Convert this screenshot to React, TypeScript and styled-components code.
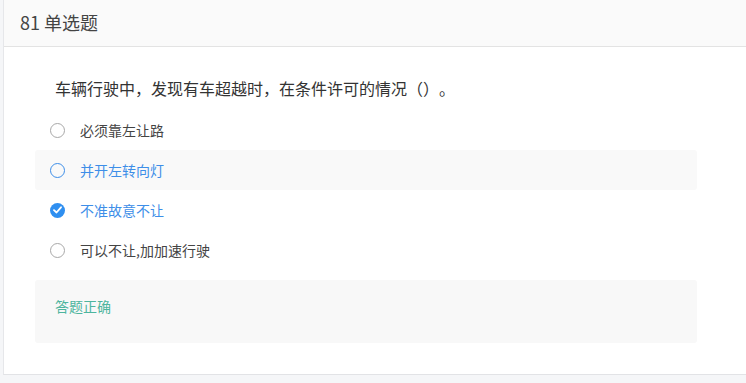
import React from "react"
import styled, { createGlobalStyle } from "styled-components"

const GlobalStyle = createGlobalStyle`
    html, body {
        margin: 0;
        padding: 0;
        background: #f5f6f8;
        font-family: "Noto Sans CJK SC", "Noto Sans", sans-serif;
        text-spacing-trim: space-all;
    }
`

const Page = styled.div`
    padding-left: 3px;
    height: 383px;
    background: #f5f6f8;
`

const Card = styled.div`
    background: #fff;
    border-left: 1px solid #e6e7ea;
    border-bottom: 1px solid #e2e3e6;
    height: 375px;
    box-sizing: border-box;
`

const Header = styled.div`
    height: 47px;
    box-sizing: border-box;
    display: flex;
    align-items: center;
    padding: 0 0 2px 16px;
    background: #fafafa;
    border-bottom: 1px solid #e3e3e3;
    font-size: 18px;
    color: #444;
`

const Body = styled.div`
    padding: 29px 49px 0 31px;
`

const Question = styled.div`
    padding-left: 20px;
    font-size: 16px;
    line-height: 24px;
    color: #333;
    margin-bottom: 10px;
`

const Options = styled.div`
    display: flex;
    flex-direction: column;
`

const Option = styled.div<{ $active?: boolean; $blue?: boolean }>`
    height: 40px;
    display: flex;
    align-items: center;
    gap: 15px;
    padding-left: 15px;
    border-radius: 3px;
    background: ${p => (p.$active ? "#f9f9f9" : "transparent")};
    font-size: 14px;
    color: ${p => (p.$blue ? "#3d8ee8" : "#444")};
`

const Radio = styled.span<{ $blue?: boolean }>`
    width: 15px;
    height: 15px;
    box-sizing: border-box;
    border-radius: 50%;
    border: 1px solid ${p => (p.$blue ? "#3d8ee8" : "#a8a8a8")};
    flex-shrink: 0;
`

const Checked = styled.span`
    width: 15px;
    height: 15px;
    border-radius: 50%;
    background: #2f8ff0;
    display: flex;
    align-items: center;
    justify-content: center;
    flex-shrink: 0;
`

const Result = styled.div`
    margin-top: 10px;
    height: 63px;
    box-sizing: border-box;
    padding: 16px 20px;
    background: #f8f8f8;
    border-radius: 3px;
    font-size: 14px;
    line-height: 20px;
    color: #4db59e;
`

const options = [
    { text: "必须靠左让路" },
    { text: "并开左转向灯", active: true, blue: true },
    { text: "不准故意不让", blue: true, checked: true },
    { text: "可以不让,加加速行驶" },
]

export default function App() {
    return (
        <>
            <GlobalStyle />
            <Page>
                <Card>
                    <Header>81 单选题</Header>
                    <Body>
                        <Question>车辆行驶中，发现有车超越时，在条件许可的情况（）。</Question>
                        <Options>
                            {options.map(o => (
                                <Option key={o.text} $active={o.active} $blue={o.blue}>
                                    {o.checked ? (
                                        <Checked>
                                            <svg width="9" height="8" viewBox="0 0 9 8">
                                                <path d="M1 4.2 L3.5 6.5 L8 1.3" fill="none" stroke="#fff" strokeWidth="1.8" strokeLinecap="round" strokeLinejoin="round" />
                                            </svg>
                                        </Checked>
                                    ) : (
                                        <Radio $blue={o.blue} />
                                    )}
                                    <span>{o.text}</span>
                                </Option>
                            ))}
                        </Options>
                        <Result>答题正确</Result>
                    </Body>
                </Card>
            </Page>
        </>
    )
}
